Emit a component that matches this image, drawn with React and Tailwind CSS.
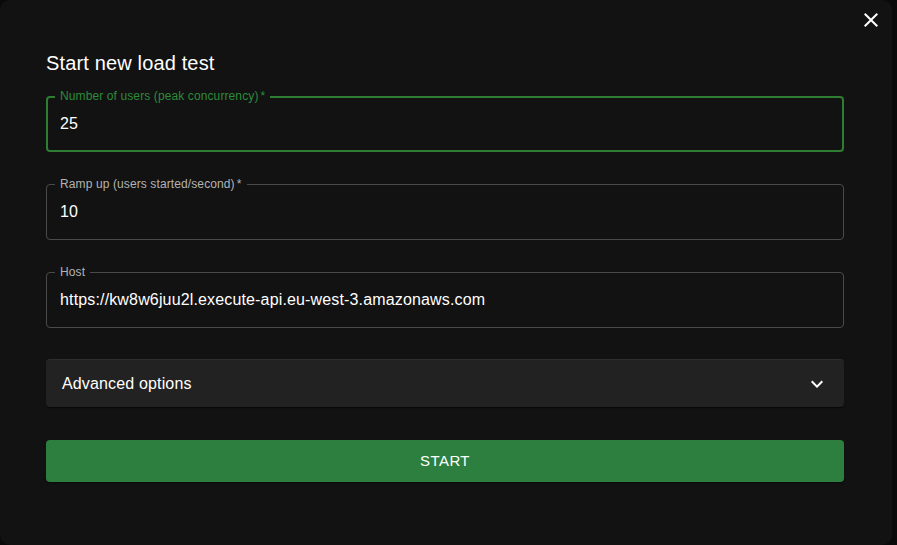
import React from 'react'

// Outlined text field with notched label (label sits over the border)
function Field({ label, value, required, focused }) {
  const border = focused ? 'border-2 border-[#2e7d32]' : 'border border-[#4a4a4a]'
  const labelColor = focused ? 'text-[#2e8b3a]' : 'text-[#b3b3b3]'
  return (
    <div className={`relative h-[56px] rounded-[4px] flex items-center ${border}`}>
      <span
        className={`absolute ${focused ? 'left-[7px] -top-[10px]' : 'left-[8px] -top-[9px]'} px-[5px] bg-[#121212] text-[12px] leading-[16px] tracking-[0.11px] ${labelColor}`}
      >
        {label}
        {required && <span className="ml-[2px]">*</span>}
      </span>
      <span className={`${focused ? 'pl-[12px]' : 'pl-[13px]'} text-[16px] tracking-[0.15px] text-white`}>{value}</span>
    </div>
  )
}

export default function App() {
  return (
    <div className="w-full h-[545px] bg-[#0a0a0a] flex overflow-hidden" style={{ fontFamily: '"Liberation Sans", Arial, sans-serif' }}>
      <div className="relative w-[892px] h-[545px] bg-[#121212] rounded-[10px] pl-[46px] pr-[48px] pt-[47px]">
        {/* Close */}
        <button className="absolute right-[9px] top-[8px] w-[24px] h-[24px] text-white">
          <svg viewBox="0 0 24 24" width="24" height="24" fill="currentColor">
            <path d="M19 6.41 17.59 5 12 10.59 6.41 5 5 6.41 10.59 12 5 17.59 6.41 19 12 13.41 17.59 19 19 17.59 13.41 12z" />
          </svg>
        </button>

        <h2 className="text-[20px] leading-[32px] tracking-[0.15px] text-white">Start new load test</h2>

        <div className="mt-[17px] flex flex-col gap-[32px]">
          <Field label="Number of users (peak concurrency)" value="25" required focused />
          <Field label="Ramp up (users started/second)" value="10" required />
          <Field label="Host" value="https://kw8w6juu2l.execute-api.eu-west-3.amazonaws.com" />

          {/* Advanced options accordion */}
          <div className="-mt-[1px] h-[48px] bg-[#222222] border-t border-[#2e2e2e] rounded-[4px] shadow-[0_2px_1px_-1px_rgba(0,0,0,0.4),0_1px_1px_0_rgba(0,0,0,0.3)] flex items-center justify-between pl-[16px] pr-[15px]">
            <span className="text-[16px] tracking-[0.15px] text-white">Advanced options</span>
            <svg viewBox="0 0 24 24" width="24" height="24" fill="white">
              <path d="M16.59 8.59 12 13.17 7.41 8.59 6 10l6 6 6-6z" />
            </svg>
          </div>

          <button className="mt-[1px] h-[42px] w-full rounded-[4px] bg-[#2c7f3e] text-white text-[15px] tracking-[0.43px] shadow-[0_3px_1px_-2px_rgba(0,0,0,0.2),0_2px_2px_0_rgba(0,0,0,0.14)]">
            START
          </button>
        </div>
      </div>
    </div>
  )
}
